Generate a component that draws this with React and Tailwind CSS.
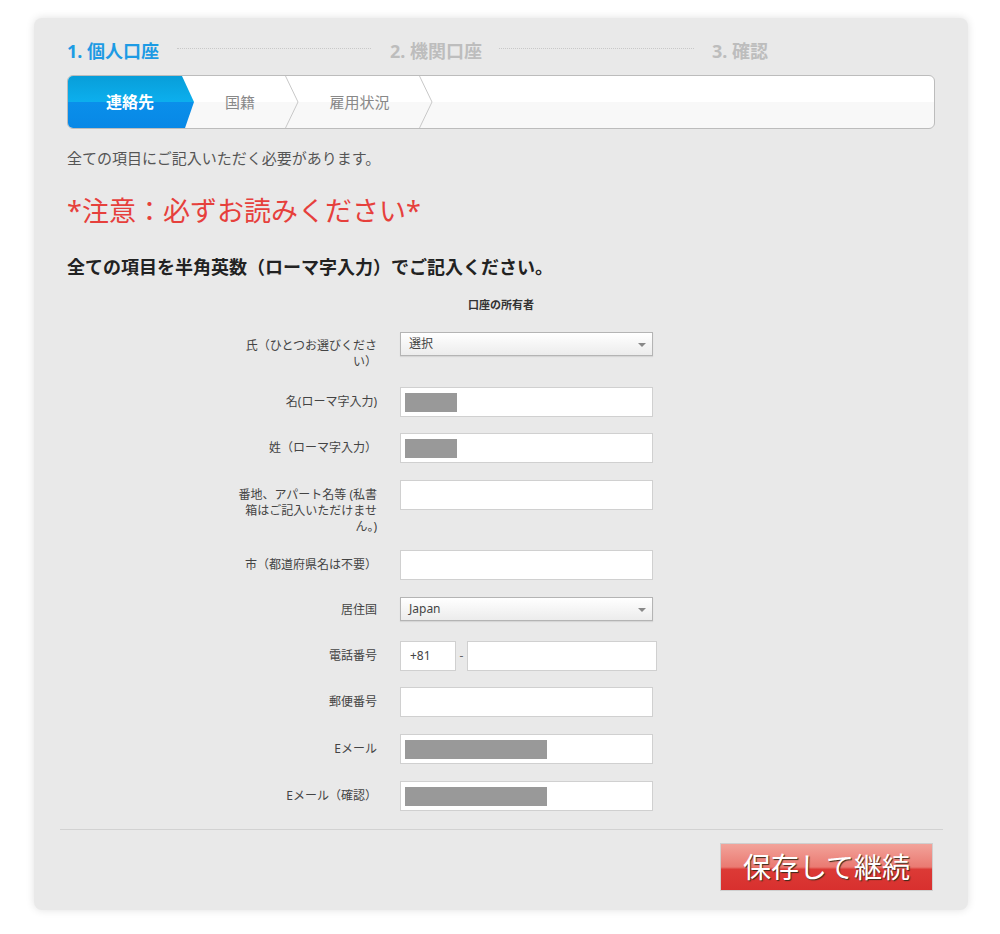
import React from 'react';

const font = "font-['Noto_Sans','Noto_Sans_CJK_JP',sans-serif]";

function Chevron() {
  return (
    <svg width="14" height="52" viewBox="0 0 14 52" className="shrink-0 -ml-[1px]">
      <polyline points="0.5,0 13,26 0.5,52" fill="none" stroke="#c8c8c8" strokeWidth="1" />
    </svg>
  );
}

function Select({ value }) {
  return (
    <div className="relative w-[253px] h-[24px] border border-[#b4b4b4] bg-[linear-gradient(to_bottom,#ffffff,#ececec)] shadow-[0_1px_1px_rgba(0,0,0,0.08)] flex items-center pl-[8px] text-[12px] leading-[16px] text-[#444]">
      {value}
      <span className="absolute right-[6px] top-[10px] w-0 h-0 border-l-[4px] border-r-[4px] border-t-[4px] border-l-transparent border-r-transparent border-t-[#888]" />
    </div>
  );
}

function Input({ block, width = 'w-[253px]' }) {
  return (
    <div className={`${width} h-[30px] bg-white border border-[#d0d0d0] relative`}>
      {block && <div className={`absolute left-[4px] top-[5px] h-[19px] bg-[#999] ${block}`} />}
    </div>
  );
}

function Row({ label, children, mt, pt = 'pt-[7px]' }) {
  return (
    <div className={`flex items-start ${mt}`}>
      <div className={`ml-[170px] w-[140px] text-right text-[12px] leading-[16px] text-[#444] ${pt}`}>{label}</div>
      <div className="ml-[23px]">{children}</div>
    </div>
  );
}

export default function App() {
  return (
    <div className={`min-h-screen bg-white pl-[34px] pt-[18px] ${font}`}>
      <div className="w-[934px] bg-[#e9e9e9] rounded-[8px] shadow-[0_0_8px_rgba(0,0,0,0.12)] px-[33px] pt-[23px] pb-[19px]">
        {/* steps */}
        <div className="flex items-center h-[20px] text-[18px] leading-[20px] font-bold">
          <span className="w-[92px] text-[#1d9be4] whitespace-nowrap">1. 個人口座</span>
          <div className="ml-[18px] w-[194px] border-t border-dotted border-[#c8c8c8] -mt-[5px]" />
          <span className="ml-[19px] w-[92px] text-[#bdbdbd] whitespace-nowrap">2. 機関口座</span>
          <div className="ml-[17px] w-[195px] border-t border-dotted border-[#c8c8c8] -mt-[5px]" />
          <span className="ml-[18px] text-[#bdbdbd]">3. 確認</span>
        </div>

        {/* breadcrumb */}
        <div className="mt-[14px] h-[54px] border border-[#bcbcbc] rounded-[6px] overflow-hidden flex bg-[linear-gradient(to_bottom,#ffffff_50%,#f8f8f8_50%)]">
          <div className="w-[126px] h-full shrink-0 flex items-center justify-center text-white font-bold text-[16px] [clip-path:polygon(0_0,calc(100%-12px)_0,100%_50%,calc(100%-9px)_100%,0_100%)] bg-[linear-gradient(to_bottom,#089ed9_0%,#0cafee_50%,#0a8fea_50%,#0888e6_100%)]">
            <span className="-ml-[2px]">連絡先</span>
          </div>
          <div className="w-[92px] flex items-center justify-center text-[15px] text-[#888]">国籍</div>
          <Chevron />
          <div className="w-[121px] flex items-center justify-center text-[15px] text-[#888]">雇用状況</div>
          <Chevron />
        </div>

        <p className="mt-[19px] text-[15px] leading-[20px] text-[#555]">全ての項目にご記入いただく必要があります。</p>
        <h2 className="mt-[27px] text-[27px] leading-[32px] text-[#e6403c]">*注意：必ずお読みください*</h2>
        <h3 className="mt-[28px] text-[18px] leading-[24px] font-bold text-[#222]">全ての項目を半角英数（ローマ字入力）でご記入ください。</h3>

        <div className="mt-[18px] text-center text-[11px] leading-[16px] font-bold text-[#333]">口座の所有者</div>

        <Row label="氏（ひとつお選びください）" mt="mt-[19px]" pt="pt-[6px]">
          <Select value="選択" />
        </Row>
        <Row label="名(ローマ字入力)" mt="mt-[17px]">
          <Input block="w-[52px]" />
        </Row>
        <Row label="姓（ローマ字入力）" mt="mt-[16px]">
          <Input block="w-[52px]" />
        </Row>
        <Row label="番地、アパート名等 (私書箱はご記入いただけません。)" mt="mt-[17px]">
          <Input />
        </Row>
        <Row label="市（都道府県名は不要）" mt="mt-[15px]">
          <Input />
        </Row>
        <Row label="居住国" mt="mt-[17px]" pt="pt-[5px]">
          <Select value="Japan" />
        </Row>
        <Row label="電話番号" mt="mt-[20px]">
          <div className="flex items-start">
            <div className="w-[56px] h-[30px] bg-white border border-[#d0d0d0] flex items-center pl-[9px] text-[12px] text-[#444]">+81</div>
            <span className="w-[11px] text-center text-[12px] leading-[30px] text-[#666]">-</span>
            <Input width="w-[190px]" />
          </div>
        </Row>
        <Row label="郵便番号" mt="mt-[16px]">
          <Input />
        </Row>
        <Row label="Eメール" mt="mt-[17px]">
          <Input block="w-[142px]" />
        </Row>
        <Row label="Eメール（確認）" mt="mt-[17px]">
          <Input block="w-[142px]" />
        </Row>

        <div className="mt-[18px] -ml-[7px] -mr-[8px] border-t border-[#d2d2d2]" />

        <div className="mt-[13px] flex justify-end pr-[2px]">
          <button className="w-[213px] h-[48px] border border-[#cfcfcf] bg-[linear-gradient(to_bottom,#f2a39a_0%,#ea7a72_50%,#dc3a36_55%,#d8302e_100%)] text-white text-[28px] leading-[46px] [text-shadow:1px_1px_1px_#3a2a1a]">
            保存して継続
          </button>
        </div>
      </div>
    </div>
  );
}
